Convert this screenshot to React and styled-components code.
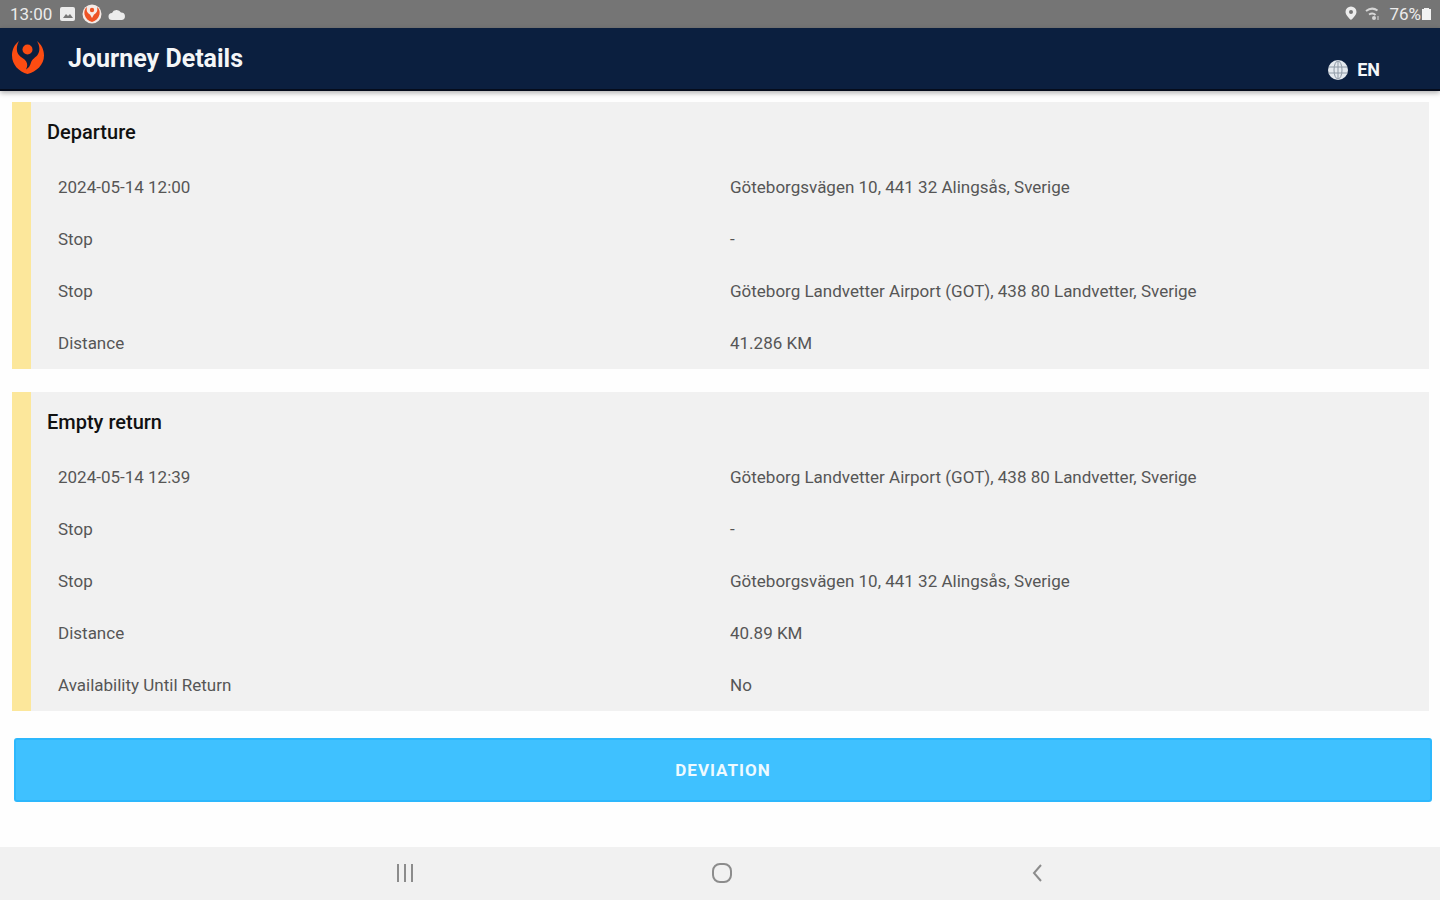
import React from 'react';
import styled, { createGlobalStyle } from 'styled-components';

const colors = {
  statusBar: '#757575',
  header: '#0b1f3f',
  brand: '#fc4c12',
  surface: '#f1f1f1',
  stripe: '#fce79b',
  action: '#3fc1ff',
  actionBorder: '#2db8fd',
  text: '#565656',
  heading: '#111111',
  navIcon: '#8c8c8c',
};

const GlobalStyle = createGlobalStyle`
  * {
    box-sizing: border-box;
  }
  body {
    margin: 0;
    background: #fefefe;
    font-family: Roboto, 'Liberation Sans', sans-serif;
  }
`;

const Screen = styled.div`
  display: flex;
  flex-direction: column;
  min-height: 100vh;
`;

const StatusBar = styled.div`
  display: flex;
  justify-content: space-between;
  align-items: center;
  height: 28px;
  padding: 0 8px 0 10px;
  background: ${colors.statusBar};
  color: #ececec;
  font-size: 17px;
`;

const StatusGroup = styled.div`
  display: flex;
  align-items: center;
  gap: ${(props) => props.$gap};
`;

const Battery = styled.span`
  display: flex;
  align-items: center;
`;

const Header = styled.header`
  display: flex;
  align-items: center;
  height: 63px;
  padding: 0 60px 0 10px;
  background: ${colors.header};
  border-bottom: 2px solid #050c1c;
  box-shadow: 0 2px 5px rgba(0, 0, 0, 0.3);
  color: #f4f6f8;
`;

const PageTitle = styled.h1`
  flex: 1;
  margin: 0 0 0 22px;
  font-size: 25px;
  font-weight: 700;
  line-height: 32px;
`;

const LanguageButton = styled.button`
  display: flex;
  align-items: center;
  align-self: flex-end;
  gap: 8px;
  padding: 0;
  margin-bottom: 7px;
  border: 0;
  background: none;
  color: inherit;
  font-family: inherit;
  font-size: 18px;
  font-weight: 700;
  line-height: 24px;
`;

const Content = styled.main`
  display: flex;
  flex: 1;
  flex-direction: column;
  gap: 23px;
  padding: 11px 11px 24px 12px;
`;

const Card = styled.section`
  border-left: 19px solid ${colors.stripe};
  background: ${colors.surface};
`;

const CardTitle = styled.h2`
  margin: 0;
  padding: 18px 16px 17px;
  color: ${colors.heading};
  font-size: 20px;
  font-weight: 500;
  line-height: 24px;
`;

const CardBody = styled.div`
  padding: 0 27px;
`;

const DetailsTable = styled.table`
  width: 100%;
  border-collapse: collapse;
  table-layout: fixed;
  color: ${colors.text};
  font-size: 17px;
  line-height: 24px;
  text-align: left;

  th,
  td {
    height: 52px;
    padding: 0;
    font-weight: 400;
  }
`;

const DeviationButton = styled.button`
  height: 64px;
  margin: 4px -3px 0 2px;
  border: 2px solid ${colors.actionBorder};
  border-radius: 3px;
  background: ${colors.action};
  color: #eefaff;
  font-family: inherit;
  font-size: 17px;
  font-weight: 700;
  letter-spacing: 1px;
  text-transform: uppercase;
`;

const NavBar = styled.nav`
  display: grid;
  grid-template-columns: repeat(3, 22%);
  justify-content: center;
  height: 53px;
  padding: 0 0 2px 3px;
  background: ${colors.surface};
`;

const NavButton = styled.button`
  display: flex;
  align-items: center;
  justify-content: center;
  padding: 0;
  border: 0;
  background: none;
  color: ${colors.navIcon};
`;

const journeys = [
  {
    title: 'Departure',
    rows: [
      ['2024-05-14 12:00', 'Göteborgsvägen 10, 441 32 Alingsås, Sverige'],
      ['Stop', '-'],
      ['Stop', 'Göteborg Landvetter Airport (GOT), 438 80 Landvetter, Sverige'],
      ['Distance', '41.286 KM'],
    ],
  },
  {
    title: 'Empty return',
    rows: [
      ['2024-05-14 12:39', 'Göteborg Landvetter Airport (GOT), 438 80 Landvetter, Sverige'],
      ['Stop', '-'],
      ['Stop', 'Göteborgsvägen 10, 441 32 Alingsås, Sverige'],
      ['Distance', '40.89 KM'],
      ['Availability Until Return', 'No'],
    ],
  },
];

const Logo = ({ size }) => (
  <svg width={size} height={size} viewBox="0 0 36 36" fill={colors.brand} aria-hidden="true">
    <path d="M9 0C4.500 3.500 2 8.500 2 14.500 2 24 9 30.500 17.500 33 26.500 30.500 34 24 34 14.500 34 8.500 31.500 3.500 27 0c3 5 3.200 10.500.5 14-2 2.600-5.500 4-6.500 7.500-.8 3-2 5-5 7 1.500-3 1.700-5.500.2-8C14.500 17.500 10.500 16.500 8.500 13.500 6 9.800 6.500 4.500 9 0z" />
    <circle cx="17.500" cy="8.500" r="5" />
  </svg>
);

const AppBadgeIcon = () => (
  <svg width="20" height="20" viewBox="0 0 20 20" aria-hidden="true">
    <circle cx="10" cy="10" r="9.500" fill="#f5ebe7" />
    <path
      d="M5 3C2.500 5 2 7.500 2.500 10.500 3.500 14.500 6.500 17 10 18c3.500-1 6.500-3.500 7.500-7.500C18 7.500 17.500 5 15 3c1 4-.5 6-3 7.500L10 14l-2-3.500C5.500 9 4 7 5 3z"
      fill="#ee5325"
    />
    <circle cx="10" cy="6" r="2.200" fill="#ee5325" />
  </svg>
);

const ImageIcon = () => (
  <svg width="18" height="16" viewBox="0 0 18 16" aria-hidden="true">
    <rect x="2" y="1" width="15" height="14" rx="2" fill="#ececec" />
    <path d="M5 12l3-4 2 2 2-2 3 4z" fill="#777777" />
  </svg>
);

const CloudIcon = () => (
  <svg width="18" height="14" viewBox="0 0 18 14" fill="#ececec" aria-hidden="true">
    <path d="M4 13a3.500 3.500 0 0 1 0-7 5 5 0 0 1 9-.5A3.800 3.800 0 0 1 14 13z" />
  </svg>
);

const PinIcon = () => (
  <svg width="12" height="16" viewBox="0 0 12 16" fill="#ececec" aria-hidden="true">
    <path
      fillRule="evenodd"
      d="M6 .5A5.500 5.500 0 0 0 .5 6C.5 9.500 6 14 6 14s5.500-4.500 5.500-8A5.500 5.500 0 0 0 6 .5zM6 4a2 2 0 1 1 0 4 2 2 0 0 1 0-4z"
    />
  </svg>
);

const WifiIcon = () => (
  <svg width="16" height="16" viewBox="0 0 16 16" fill="none" stroke="#d6d6d6" strokeWidth="2" aria-hidden="true">
    <path d="M1 5c4-3 8-3 11.500-.5M4 8.500c2.500-1.500 4.500-1.500 6.500.5" />
    <circle cx="9" cy="12" r="1" fill="#d6d6d6" />
    <path d="M13 10v4" strokeWidth="1" />
  </svg>
);

const BatteryIcon = () => (
  <svg width="11" height="14" viewBox="0 0 11 14" fill="#f2f2f2" aria-hidden="true">
    <path d="M3 1h5v1h2v11H1V2h2z" />
  </svg>
);

const GlobeIcon = () => (
  <svg width="22" height="22" viewBox="0 0 22 22" aria-hidden="true">
    <circle cx="11" cy="11" r="10" fill="#e4e9ee" />
    <g fill="none" stroke="#8e99a5" strokeWidth="1">
      <ellipse cx="11" cy="11" rx="4" ry="9" />
      <path d="M2 8h18M2 14h18M11 2v18" />
    </g>
  </svg>
);

const RecentsIcon = () => (
  <svg width="20" height="20" viewBox="0 0 20 20" stroke="currentColor" strokeWidth="2" aria-hidden="true">
    <path d="M3 1v18M10 1v18M17 1v18" />
  </svg>
);

const HomeIcon = () => (
  <svg width="22" height="22" viewBox="0 0 22 22" fill="none" stroke="currentColor" strokeWidth="2" aria-hidden="true">
    <rect x="2" y="2" width="18" height="18" rx="7" />
  </svg>
);

const BackIcon = () => (
  <svg width="20" height="20" viewBox="0 0 20 20" fill="none" stroke="currentColor" strokeWidth="2" aria-hidden="true">
    <path d="M13 2L6 10l7 8" />
  </svg>
);

const JourneyCard = ({ title, rows }) => (
  <Card>
    <CardTitle>{title}</CardTitle>
    <CardBody>
      <DetailsTable aria-label={title}>
        <tbody>
          {rows.map(([label, value], index) => (
            <tr key={index}>
              <th scope="row">{label}</th>
              <td>{value}</td>
            </tr>
          ))}
        </tbody>
      </DetailsTable>
    </CardBody>
  </Card>
);

const App = () => {
  return (
    <Screen>
      <GlobalStyle />
      <StatusBar>
        <StatusGroup $gap="6px">
          <span>13:00</span>
          <ImageIcon />
          <AppBadgeIcon />
          <CloudIcon />
        </StatusGroup>
        <StatusGroup $gap="8px">
          <PinIcon />
          <WifiIcon />
          <Battery>
            76%
            <BatteryIcon />
          </Battery>
        </StatusGroup>
      </StatusBar>
      <Header>
        <Logo size={36} />
        <PageTitle>Journey Details</PageTitle>
        <LanguageButton type="button">
          <GlobeIcon />
          EN
        </LanguageButton>
      </Header>
      <Content>
        {journeys.map((journey) => (
          <JourneyCard key={journey.title} title={journey.title} rows={journey.rows} />
        ))}
        <DeviationButton type="button">Deviation</DeviationButton>
      </Content>
      <NavBar>
        <NavButton type="button" aria-label="Recent apps">
          <RecentsIcon />
        </NavButton>
        <NavButton type="button" aria-label="Home">
          <HomeIcon />
        </NavButton>
        <NavButton type="button" aria-label="Back">
          <BackIcon />
        </NavButton>
      </NavBar>
    </Screen>
  );
};

export default App;
